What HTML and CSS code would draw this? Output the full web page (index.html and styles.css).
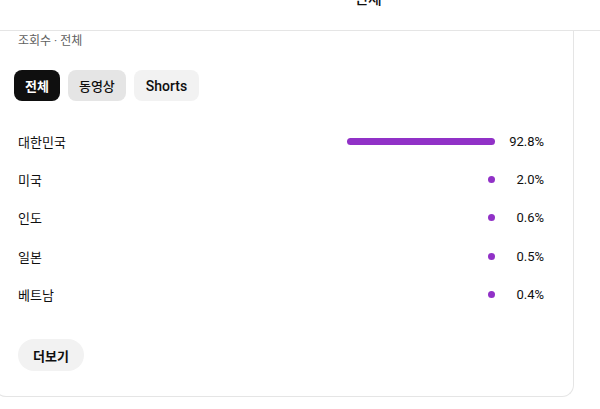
FILE: index.html
```html
<!DOCTYPE html>
<html lang="ko">
<head>
    <meta charset="utf-8">
    <meta name="viewport" content="width=device-width, initial-scale=1.0">
    <title>지역별 조회수</title>
    <link rel="stylesheet" href="styles.css">
</head>
<body>
    <div class="top-tabs">
        <span class="top-tab">전체</span>
    </div>
    <div class="card">
        <div class="card-sub">조회수 · 전체</div>
        <div class="chips">
            <button class="chip active">전체</button>
            <button class="chip hover">동영상</button>
            <button class="chip latin">Shorts</button>
        </div>
        <div class="rows">
            <div class="row">
                <span class="name">대한민국</span>
                <div class="track"><div class="bar" style="width: 148px"></div></div>
                <span class="pct">92.8%</span>
            </div>
            <div class="row">
                <span class="name">미국</span>
                <div class="track"><div class="bar"></div></div>
                <span class="pct">2.0%</span>
            </div>
            <div class="row">
                <span class="name">인도</span>
                <div class="track"><div class="bar"></div></div>
                <span class="pct">0.6%</span>
            </div>
            <div class="row">
                <span class="name">일본</span>
                <div class="track"><div class="bar"></div></div>
                <span class="pct">0.5%</span>
            </div>
            <div class="row">
                <span class="name">베트남</span>
                <div class="track"><div class="bar"></div></div>
                <span class="pct">0.4%</span>
            </div>
        </div>
        <button class="more">더보기</button>
    </div>
</body>
</html>
```

FILE: styles.css
```css
body {
    margin: 0;
    background: #fff;
    color: #0f0f0f;
    font-family: Roboto, "Noto Sans CJK KR", sans-serif;
    overflow: hidden;
}
.top-tabs {
    height: 30px;
    border-bottom: 1px solid #e5e5e5;
    display: flex;
    justify-content: center;
    padding-left: 136px;
    overflow: hidden;
}
.top-tab {
    font-size: 15px;
    font-weight: 500;
    line-height: 20px;
    margin-top: -11px;
}
.card {
    box-sizing: border-box;
    margin-left: -6px;
    width: 580px;
    height: 366px;
    padding: 0 24px 0 19px;
    border: 1px solid #e5e5e5;
    border-top: none;
    border-radius: 0 0 12px 12px;
}
.card-sub {
    font-size: 12px;
    color: #606060;
    line-height: 16px;
    padding: 2px 0 0 4px;
}
.chips {
    display: flex;
    gap: 8px;
    margin-top: 21px;
}
.chip {
    height: 31px;
    padding: 0 11px;
    border: none;
    border-radius: 8px;
    background: #f2f2f2;
    color: #0f0f0f;
    font-family: Roboto, "Noto Sans CJK KR", sans-serif;
    font-size: 13px;
    font-weight: 500;
}
.chip.latin {
    font-size: 14px;
    padding: 0 12px;
}
.chip.active {
    background: #0f0f0f;
    color: #fff;
    font-weight: 700;
}
.chip.hover {
    background: #e5e5e5;
}
.rows {
    margin-top: 21px;
    padding-left: 4px;
}
.row {
    display: flex;
    align-items: center;
    height: 38.3px;
    font-size: 13px;
}
.name {
    flex: 1;
}
.track {
    width: 160px;
    display: flex;
    justify-content: flex-end;
}
.bar {
    width: 7px;
    height: 7px;
    border-radius: 4px;
    background: #9131c7;
}
.pct {
    width: 49px;
    text-align: right;
    margin-right: 5px;
}
.more {
    margin: 26px 0 0 4px;
    height: 32px;
    padding: 0 15px;
    border: none;
    border-radius: 16px;
    background: #f2f2f2;
    color: #0f0f0f;
    font-family: Roboto, "Noto Sans CJK KR", sans-serif;
    font-size: 13px;
    font-weight: 700;
}
```
